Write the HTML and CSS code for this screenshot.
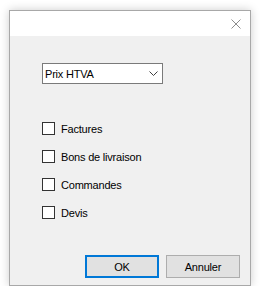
FILE: index.html
```html
<!DOCTYPE html>
<html lang="fr">
<head>
    <meta charset="UTF-8">
    <title>Export</title>
    <link rel="stylesheet" href="styles.css">
</head>
<body>
    <div class="dialog">
        <div class="titlebar">
            <svg class="close" viewBox="0 0 10 10" width="10" height="10">
                <path d="M0.5 0.5L9.5 9.5M9.5 0.5L0.5 9.5" stroke="#8c8c8c" stroke-width="1" fill="none"/>
            </svg>
        </div>

        <div class="content">
            <div class="select">
                <span>Prix HTVA</span>
                <svg class="chevron" viewBox="0 0 9 5" width="9" height="5">
                    <path d="M0.5 0.5L4.5 4.5L8.5 0.5" stroke="#404040" stroke-width="1" fill="none"/>
                </svg>
            </div>

            <div class="checks">
                <label class="check"><span class="box"></span>Factures</label>
                <label class="check"><span class="box"></span>Bons de livraison</label>
                <label class="check"><span class="box"></span>Commandes</label>
                <label class="check"><span class="box"></span>Devis</label>
            </div>

            <div class="buttons">
                <button class="btn btn-default">OK</button>
                <button class="btn">Annuler</button>
            </div>
        </div>
    </div>
</body>
</html>
```

FILE: styles.css
```css
* {
    margin: 0;
    padding: 0;
    box-sizing: border-box;
}

body {
    background-color: #ffffff;
    font-family: "Liberation Sans", Arial, sans-serif;
    font-size: 11px;
    letter-spacing: -0.2px;
    color: #000000;
}

.dialog {
    margin: 10px 0 0 9px;
    width: 242px;
    height: 276px;
    border: 1px solid #a8a8a8;
    background-color: #f0f0f0;
    box-shadow: 0 0 9px rgba(0, 0, 0, 0.2);
    display: flex;
    flex-direction: column;
}

.titlebar {
    height: 25px;
    background-color: #ffffff;
    display: flex;
    justify-content: flex-end;
    align-items: flex-start;
    padding: 8px 9px 0 0;
}

.content {
    flex: 1;
    display: flex;
    flex-direction: column;
    padding: 27px 0 0 32px;
}

.select {
    width: 121px;
    height: 21px;
    border: 1px solid #7a7a7a;
    background-color: #ffffff;
    display: flex;
    align-items: center;
    justify-content: space-between;
    padding: 0 4px 0 2px;
}

.checks {
    display: flex;
    flex-direction: column;
    gap: 15px;
    margin-top: 38px;
}

.check {
    display: flex;
    align-items: center;
    gap: 6px;
    height: 13px;
}

.box {
    width: 13px;
    height: 13px;
    border: 1px solid #333333;
    background-color: #ffffff;
}

.buttons {
    display: flex;
    gap: 7px;
    margin-top: auto;
    margin-bottom: 7px;
    margin-left: 43px;
}

.btn {
    width: 74px;
    height: 23px;
    font-family: inherit;
    font-size: 11px;
    letter-spacing: -0.2px;
    color: #000000;
    background-color: #e1e1e1;
    border: 1px solid #adadad;
}

.btn-default {
    border: 2px solid #0078d7;
}
```
